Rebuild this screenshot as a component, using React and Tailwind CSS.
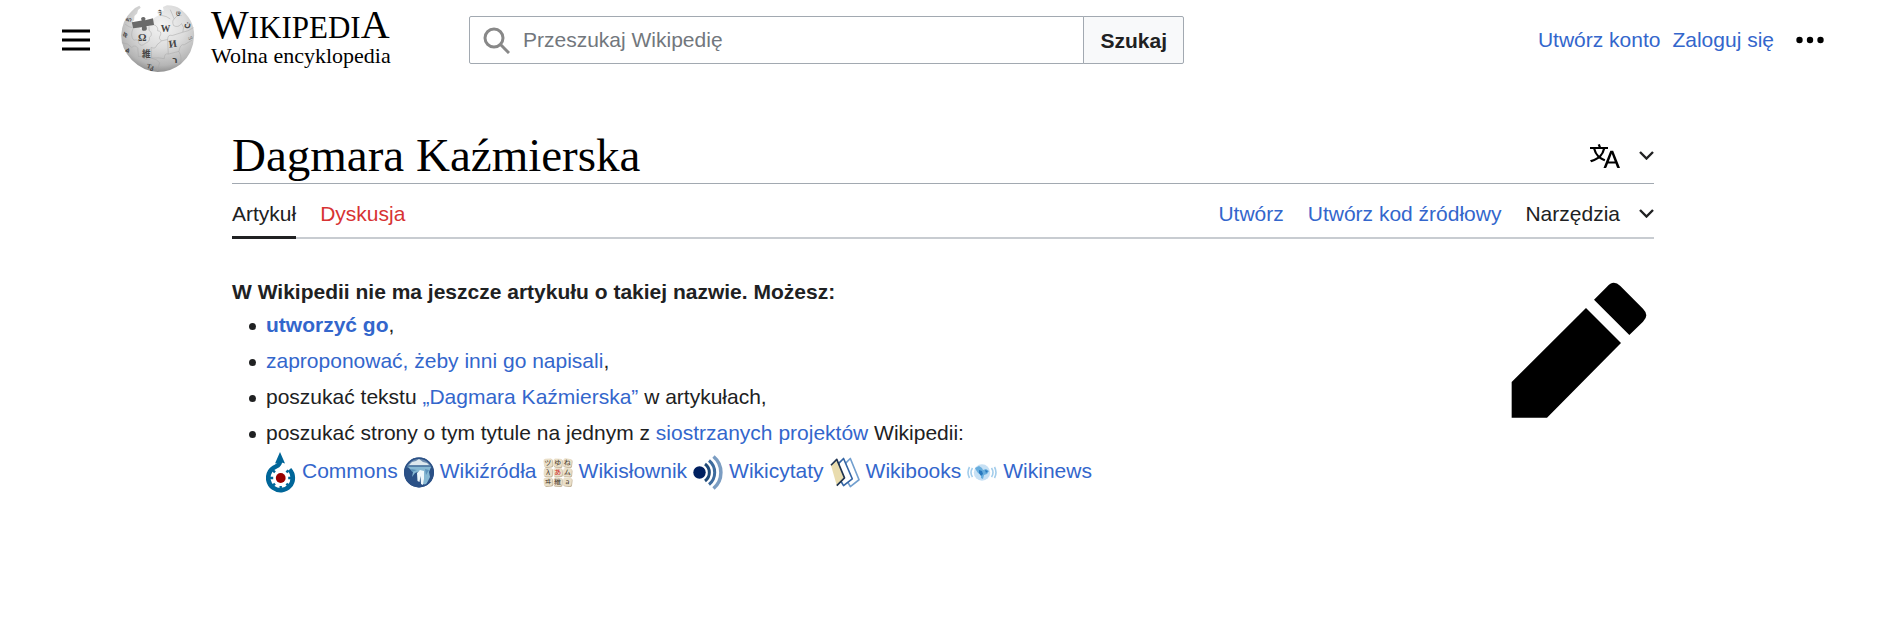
const projects = [
  { name: "Commons", Icon: CommonsIcon },
  { name: "Wikiźródła", Icon: SourceIcon },
  { name: "Wikisłownik", Icon: WiktionaryIcon },
  { name: "Wikicytaty", Icon: QuoteIcon },
  { name: "Wikibooks", Icon: BooksIcon },
  { name: "Wikinews", Icon: NewsIcon },
];

function GlobeLogo() {
  return (
    <svg viewBox="20 16 222 202" className="h-[67px] w-[74px] shrink-0" aria-hidden="true">
      <defs>
        <radialGradient id="globe" cx="0.55" cy="0.3" r="0.75">
          <stop offset="0" stopColor="#f4f4f4" />
          <stop offset="0.45" stopColor="#dcdcdc" />
          <stop offset="0.8" stopColor="#b5b5b5" />
          <stop offset="1" stopColor="#808080" />
        </radialGradient>
      </defs>
      <path
        fill="url(#globe)"
        d="M75 18 L79 24 L71 31 L68 42 L60 49 L59 62 L53 68 L56 84 L74 84 L84 92 L92 82 L114 76 L119 55 L134 46 Q124 38 134 30 L148 34 L146 22 L158 17 Q185 18 197 27 Q240 58 240 108 Q238 162 200 194 Q170 218 130 218 Q86 216 52 182 Q20 148 20 108 Q22 62 50 36 Q62 22 75 18Z"
      />
      <path
        fill="#6a6a6a"
        d="M52 68 L82 63 Q76 52 88 52 Q96 54 92 62 L116 56 L119 76 L96 80 Q101 93 90 94 Q79 94 83 83 L56 86Z"
      />
      <g fill="none" stroke="#a6a6a6" strokeWidth="1.500">
        <path d="M56 86 Q46 110 58 122 Q75 118 72 130 Q80 144 92 132 Q108 126 105 114 Q118 104 104 92 L104 80" />
        <path d="M119 76 Q132 80 130 94 Q142 94 139 106 Q130 118 142 124 L160 120 Q160 104 174 108 L206 98 Q212 82 202 72 Q192 86 178 78 Q172 64 180 58 L168 30" />
        <path d="M22 130 Q40 130 52 144 Q62 134 70 146 L72 172 Q88 168 92 180 Q104 184 112 176 L110 144 Q124 150 128 136 L142 124" />
        <path d="M110 176 Q130 180 136 190 M136 190 L128 216 M112 176 Q136 174 150 178 Q150 160 162 164 L160 120 M162 164 L194 156 Q198 132 210 136 L234 122 M206 98 Q222 96 238 84 M194 156 Q206 176 196 196 M136 46 Q160 50 168 58 M180 58 Q192 42 202 48 M32 74 Q44 84 54 84" />
      </g>
      <g fill="#444" fontFamily="Liberation Serif, serif" fontWeight="bold">
        <text x="71" y="126" fontSize="32">Ω</text>
        <text x="139" y="97" fontSize="29">W</text>
        <text x="165" y="145" fontSize="31" transform="rotate(-8 165 145)">И</text>
        <text x="83" y="173" fontSize="26" fontFamily="Noto Sans CJK JP, sans-serif">維</text>
        <text x="174" y="190" fontSize="27" fontFamily="DejaVu Sans, sans-serif">ר</text>
        <text x="208" y="80" fontSize="27" transform="rotate(12 208 80)">ن</text>
        <text x="132" y="46" fontSize="18" transform="rotate(10 132 46)">วิ</text>
        <text x="26" y="112" fontSize="20" transform="rotate(-12 26 112)">ф</text>
        <text x="32" y="154" fontSize="20" transform="rotate(28 32 154)">ል</text>
        <text x="96" y="205" fontSize="19" transform="rotate(14 96 205)">Tკ</text>
        <text x="183" y="43" fontSize="20" transform="rotate(32 183 43)">ও</text>
        <text x="36" y="68" fontSize="18" transform="rotate(-50 40 64)">ち</text>
        <text x="220" y="118" fontSize="18" fill="#777">ம</text>
      </g>
    </svg>
  );
}

function Chevron() {
  return (
    <svg viewBox="0 0 15 9" className="h-[9px] w-[15px]" aria-hidden="true">
      <path d="M1 1l6.500 6.500L14 1" fill="none" stroke="#202122" strokeWidth="2.400" />
    </svg>
  );
}

function CommonsIcon() {
  return (
    <svg viewBox="0 0 30 41" className="h-[41px] w-[30px]" aria-hidden="true">
      <path
        d="M23.500 17.500A12.300 12.300 0 1 1 4 19.500Q5.500 16.500 10 14.500Q14.300 12.500 14 8"
        fill="none"
        stroke="#069"
        strokeWidth="4.600"
      />
      <path d="M14 0l5 11.500-5-1.500-5 1.500z" fill="#069" />
      <circle cx="14.700" cy="26" r="4.900" fill="#900" />
      <path
        d="M14.700 37v-3M7 33.700l2-2M3.700 26h3.500M7 18.300l2 2M22.400 33.700l-2-2M25.700 26h-3.500M22.400 18.300l-2 2"
        stroke="#069"
        strokeWidth="2.400"
      />
    </svg>
  );
}

function SourceIcon() {
  return (
    <svg viewBox="0 0 30 31" className="h-[31px] w-[30px]" aria-hidden="true">
      <defs>
        <clipPath id="disc">
          <circle cx="15" cy="15.500" r="15" />
        </clipPath>
      </defs>
      <g clipPath="url(#disc)">
        <path d="M0 0h30v31H0z" fill="#2b5186" />
        <path d="M0 0h30v9H0z" fill="#6d8cae" />
        <path d="M5 8l3-3 4-1 3-2 4 3 4 1 2 2z" fill="#dce8ee" />
        <path d="M0 8.500h30v2H0z" fill="#5480a8" />
        <path d="M4 10h23l-2 5 1 5-4 8-3-1 1-11-4-2-5 2-3 4 1-5z" fill="#86b8d3" />
        <path d="M13 16l3-3 4 1v8l-1 6-2-1-.5-8-1 6-2-1z" fill="#eef8fb" />
        <path d="M7 12l6 1-5 2zM21 12l4 1-3 5z" fill="#5c93bb" />
      </g>
      <circle cx="15" cy="15.500" r="14.200" fill="none" stroke="#2b5086" strokeWidth="1.500" />
    </svg>
  );
}

function WiktionaryIcon() {
  const tiles = ["ツ", "ゆ", "ね", "λ", "あ", "ム", "ヰ", "維", "a"];
  return (
    <svg viewBox="0 0 30 29" className="h-[29px] w-[30px]" aria-hidden="true">
      {tiles.map((tile, i) => {
        const x = (i % 3) * 9.7 + 0.7;
        const y = Math.floor(i / 3) * 9.5 + 0.6;
        const tilt = [-6, 4, 7, 3, -4, 5, -5, 2, 6][i];
        return (
          <g key={tile} transform={`rotate(${tilt} ${x + 4.3} ${y + 4.2})`}>
            <rect x={x + 0.5} y={y + 0.6} width="8.800" height="8.600" rx="2" fill="#c4b59c" />
            <rect x={x} y={y} width="8.600" height="8.300" rx="2" fill="#eadfc8" />
            <text
              x={x + 4.3}
              y={y + 6.7}
              fontSize="7"
              textAnchor="middle"
              fontFamily="Noto Sans CJK JP, sans-serif"
              fill={i === 4 ? "#c22" : "#3b3026"}
            >
              {tile}
            </text>
          </g>
        );
      })}
    </svg>
  );
}

function QuoteIcon() {
  return (
    <svg viewBox="0 0 30 35" className="h-[35px] w-[30px]" aria-hidden="true">
      <circle cx="6.500" cy="17.500" r="6.200" fill="#002060" />
      <g fill="none" strokeWidth="3">
        <path d="M12 9a10.500 10.500 0 0 1 0 17" stroke="#204a78" />
        <path d="M16 5.500a15.500 15.500 0 0 1 0 24" stroke="#3d6b9d" />
        <path d="M20.500 1.500a21 21 0 0 1 0 32" stroke="#7b9dc2" strokeWidth="3.500" />
      </g>
    </svg>
  );
}

function BooksIcon() {
  return (
    <svg viewBox="0 0 31 31" className="h-[31px] w-[30px]" aria-hidden="true">
      <g strokeWidth="1.700" strokeLinejoin="round">
        <path d="M16 6l5-5 9 22-9 7-3-5z" fill="#fff" stroke="#729fcf" />
        <path d="M9 6l5-5 9 21-9 7-3-5z" fill="#fff" stroke="#3465a4" />
        <path d="M1 8l6-6 8 19-8 8z" fill="#e9dcae" />
        <path d="M1 8l6-6 8 19-8 8" fill="none" stroke="#1f3350" />
      </g>
    </svg>
  );
}

function NewsIcon() {
  return (
    <svg viewBox="0 0 30 17" className="h-[17px] w-[30px]" aria-hidden="true">
      <circle cx="15" cy="8.500" r="8.200" fill="#c6e0f4" />
      <path d="M8 4l4-2 3 2 1 2 3-1 3 2-2 3-3 1-1 4-2-1v-3l-3-2-2-3z" fill="#67addd" />
      <path d="M12 6l3 1 1 3-2 2-2-3zM18 6l3 1-2 2z" fill="#2878bd" />
      <g fill="none" stroke="#a3cdeb" strokeWidth="1.600">
        <path d="M5.500 4q-3 4.500 0 9M2.500 3q-3 5.500 0 11M24.500 4q3 4.500 0 9M27.500 3q3 5.500 0 11" />
      </g>
    </svg>
  );
}

function Link({ children, className = "" }) {
  return (
    <a href="#" className={`text-[#3366cc] hover:underline ${className}`}>
      {children}
    </a>
  );
}

function Header() {
  return (
    <header className="flex h-20 items-center pr-[77px] pl-[62px]">
      <button aria-label="Menu główne" className="shrink-0">
        <svg viewBox="0 0 28 28" className="h-7 w-7" aria-hidden="true">
          <path d="M0 5h28M0 14h28M0 23h28" stroke="#000" strokeWidth="3" />
        </svg>
      </button>

      <a
        href="#"
        className="ml-[31px] flex w-[348px] shrink-0 items-center gap-4 pb-1 font-['Liberation_Serif',serif] text-black"
      >
        <GlobeLogo />
        <span className="flex flex-col">
          <span className="text-[40px] leading-8">
            W<span className="text-[31px]">IKIPEDI</span>A
          </span>
          <span className="text-[22px] leading-6">Wolna encyklopedia</span>
        </span>
      </a>

      <form className="flex h-12 w-[715px]" onSubmit={(e) => e.preventDefault()}>
        <div className="flex grow items-center rounded-l-xs border border-[#a2a9b1] bg-white pl-[13px]">
          <svg viewBox="0 0 27 27" className="h-[27px] w-[27px] shrink-0" aria-hidden="true">
            <g fill="none" stroke="#888" strokeWidth="3">
              <circle cx="11" cy="11" r="9" />
              <path d="M17 17l9 9" />
            </g>
          </svg>
          <input
            type="search"
            aria-label="Przeszukaj Wikipedię"
            placeholder="Przeszukaj Wikipedię"
            className="ml-[13px] h-full min-w-0 grow outline-none placeholder:text-[#72777d]"
          />
        </div>
        <button className="-ml-px rounded-r-xs border border-[#a2a9b1] bg-[#f8f9fa] px-4 font-bold">
          Szukaj
        </button>
      </form>

      <nav className="ml-auto flex items-center gap-3 pb-px">
        <Link>Utwórz konto</Link>
        <Link>Zaloguj się</Link>
        <button aria-label="Więcej opcji" className="ml-[10px]">
          <svg viewBox="0 0 28 8" className="h-2 w-7" aria-hidden="true">
            <circle cx="3.500" cy="4" r="3.200" />
            <circle cx="14" cy="4" r="3.200" />
            <circle cx="24.500" cy="4" r="3.200" />
          </svg>
        </button>
      </nav>
    </header>
  );
}

function Item({ children }) {
  return (
    <li className="before:mr-[10px] before:-ml-[17px] before:inline-block before:size-[7px] before:rounded-full before:bg-[#202122] before:align-middle">
      {children}
    </li>
  );
}

export default function App() {
  return (
    <div className="min-h-screen bg-white font-['Liberation_Sans',Arial,sans-serif] text-[21px] leading-[33px] text-[#202122]">
      <Header />

      <main className="mr-[247px] ml-[232px]">
        <div className="mt-12 flex items-center justify-between border-b border-[#a2a9b1]">
          <h1 className="font-['Liberation_Serif',serif] text-[47px] leading-[55px] text-black">
            Dagmara Kaźmierska
          </h1>
          <button aria-label="Języki" className="flex items-center gap-[19px]">
            <svg viewBox="0 0 20 20" className="h-[30px] w-[30px]" aria-hidden="true">
              <path d="M20 18h-1.440a.61.61 0 0 1-.4-.12.81.81 0 0 1-.23-.31L17 15h-5l-1 2.540a.77.77 0 0 1-.22.3.59.59 0 0 1-.4.14H9l4.550-11.470h1.890zm-3.530-4.310L14.890 9.500a11.620 11.620 0 0 1-.39-1.240q-.09.37-.19.69l-.19.56-1.580 4.190zm-6.300-1.580a13.430 13.430 0 0 1-2.910-1.410 11.460 11.460 0 0 0 2.810-5.370H12V4H7.310a4 4 0 0 0-.2-.56C6.870 2.790 6.600 2 6.600 2l-1.470.5s.4.89.6 1.500H0v1.330h2.150A11.230 11.230 0 0 0 5 10.700a17.190 17.190 0 0 1-5 2.100q.56.82.87 1.380a23.280 23.280 0 0 0 5.220-2.510 15.640 15.640 0 0 0 3.560 1.770zM3.630 5.330h4.910a8.110 8.110 0 0 1-2.450 4.450 9.110 9.110 0 0 1-2.460-4.450z" />
            </svg>
            <Chevron />
          </button>
        </div>

        <div className="flex h-[55px] justify-between border-b-2 border-[#c8ccd1]">
          <nav className="-mb-[2px] flex gap-6">
            <a href="#" className="border-b-3 border-[#202122] pt-[13px]">
              Artykuł
            </a>
            <a href="#" className="pt-[13px] text-[#d73333]">
              Dyskusja
            </a>
          </nav>
          <nav className="flex gap-6 pt-[13px]">
            <Link>Utwórz</Link>
            <Link>Utwórz kod źródłowy</Link>
            <button className="flex h-[33px] items-center gap-[19px]">
              Narzędzia
              <Chevron />
            </button>
          </nav>
        </div>

        <div className="mt-9 flex justify-between">
          <div>
            <p className="font-bold">W Wikipedii nie ma jeszcze artykułu o takiej nazwie. Możesz:</p>
            <ul className="flex flex-col gap-[3px] pl-[34px]">
              <Item>
                <Link className="font-bold">utworzyć go</Link>,
              </Item>
              <Item>
                <Link>zaproponować, żeby inni go napisali</Link>,
              </Item>
              <Item>
                poszukać tekstu <Link>„Dagmara Kaźmierska”</Link> w artykułach,
              </Item>
              <Item>
                poszukać strony o tym tytule na jednym z <Link>siostrzanych projektów</Link> Wikipedii:
                <div className="mt-[3px] flex items-center gap-[6px]">
                  {projects.map(({ name, Icon }) => (
                    <div key={name} className="flex items-center gap-[6px]">
                      <Icon />
                      <Link className="pb-[5px]">{name}</Link>
                    </div>
                  ))}
                </div>
              </Item>
            </ul>
          </div>
          <svg viewBox="64 38 408 408" className="mt-[7px] mr-[7px] h-[136px] w-[136px]" aria-hidden="true">
            <path d="M66 338L289 116L394 221L172 445H66zM313 91L352 52Q371 30 392 50L460 118Q480 138 460 157L419 197z" />
          </svg>
        </div>
      </main>
    </div>
  );
}
